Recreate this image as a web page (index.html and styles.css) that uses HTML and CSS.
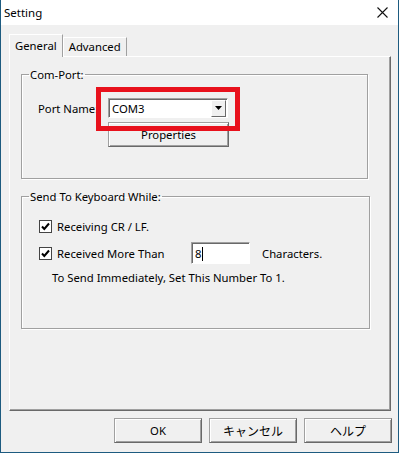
FILE: index.html
```html
<!DOCTYPE html>
<html lang="en">
<head>
    <meta charset="UTF-8">
    <title>Setting</title>
    <link rel="stylesheet" href="styles.css">
</head>
<body>

    <div class="window">
        <div class="titlebar">
            <span class="title">Setting</span>
            <svg class="close" width="11" height="11" viewBox="0 0 11 11">
                <path d="M0.5 0.5 L10.5 10.5 M10.5 0.5 L0.5 10.5" stroke="#111" stroke-width="1.1" fill="none"/>
            </svg>
        </div>

        <div class="content">
            <div class="tabs">
                <div class="tab active">General</div>
                <div class="tab">Advanced</div>
            </div>

            <div class="panel">
                <fieldset class="group com-group">
                    <legend>Com-Port:</legend>
                    <div class="port-row">
                        <span class="port-label">Port Name:</span>
                        <div class="combo">
                            <span class="combo-value">COM3</span>
                            <span class="combo-btn">
                                <svg width="7" height="4" viewBox="0 0 7 4"><path d="M0 0 H7 L3.5 4 Z" fill="#000"/></svg>
                            </span>
                        </div>
                        <!-- annotation box drawn over the screenshot -->
                        <div class="highlight"></div>
                    </div>
                    <button class="btn props-btn">Properties</button>
                </fieldset>

                <fieldset class="group send-group">
                    <legend>Send To Keyboard While:</legend>
                    <div class="check-row">
                        <span class="checkbox">
                            <svg width="11" height="11" viewBox="0 0 11 11"><path d="M2 5.5 L4.3 8 L9 2.5" stroke="#000" stroke-width="2" fill="none"/></svg>
                        </span>
                        <span>Receiving CR / LF.</span>
                    </div>
                    <div class="check-row count-row">
                        <span class="checkbox">
                            <svg width="11" height="11" viewBox="0 0 11 11"><path d="M2 5.5 L4.3 8 L9 2.5" stroke="#000" stroke-width="2" fill="none"/></svg>
                        </span>
                        <span class="count-label">Received More Than</span>
                        <div class="edit">8<span class="caret"></span></div>
                        <span class="count-unit">Characters.</span>
                    </div>
                    <div class="note">To Send Immediately, Set This Number To 1.</div>
                </fieldset>
            </div>

            <div class="buttons">
                <button class="btn dlg-btn">OK</button>
                <button class="btn dlg-btn jp">キャンセル</button>
                <button class="btn dlg-btn jp">ヘルプ</button>
            </div>
        </div>
    </div>

</body>
</html>
```

FILE: styles.css
```css
* { margin: 0; padding: 0; box-sizing: border-box; }
body {
    font-family: 'Noto Sans', 'Noto Sans CJK JP', sans-serif;
    font-size: 11.3px; color: #000; background: #f0f0f0;
}

.window {
    width: 399px; height: 453px; background: #f0f0f0;
    border: 1px solid #1d5b80; border-top: none;
}

.titlebar {
    height: 25px; background: #fff; display: flex; align-items: center;
    justify-content: space-between; padding: 0 10px 0 3px;
}
.title { font-size: 11.5px; }
.close { display: block; }

.content { padding: 9px 6px 0 8px; }

.tabs { display: flex; align-items: flex-end; height: 22px; }
.tab {
    height: 19px; padding: 0 5px; line-height: 17px; background: #f0f0f0;
    border: 1px solid #fff; border-bottom: none; border-right-color: #a0a0a0;
}
.tab.active {
    height: 23px; margin-bottom: -1px; padding: 2px 5px 0 5px; position: relative; z-index: 1;
}

.panel {
    width: 382px; height: 355px; padding: 10px 0 0 11px;
    border: 1px solid #fff; border-right-color: #696969; border-bottom-color: #696969;
    box-shadow: inset -1px -1px 0 #a0a0a0;
}

.group {
    border: 1px solid #a0a0a0; min-inline-size: 0; padding: 0;
    box-shadow: 1px 1px 0 #fff, inset 1px 1px 0 #fff;
}
.group legend { margin-left: 7px; padding: 0 1px; line-height: 15px; }

.com-group { width: 347px; height: 112px; padding-top: 16px; }
.send-group { width: 349px; height: 140px; margin-top: 10px; padding-top: 14px; }

.port-row { display: flex; align-items: center; margin-left: 16px; position: relative; height: 20px; }
.port-label { width: 70px; white-space: nowrap; overflow: hidden; }
.combo {
    width: 120px; height: 20px; background: #fff; display: flex; align-items: center;
    border: 1px solid #a0a0a0; border-right-color: #fff; border-bottom-color: #fff;
    box-shadow: inset 1px 1px 0 #696969;
}
.combo-value { flex: 1; padding-left: 3px; padding-top: 1px; }
.combo-btn {
    width: 15px; height: 17px; margin-right: 1px; background: #f0f0f0;
    display: flex; align-items: center; justify-content: center;
    border: 1px solid #fff; border-right-color: #696969; border-bottom-color: #696969;
}
.combo-btn svg { display: block; }
.highlight {
    position: absolute; left: 58px; top: -11px; width: 144px; height: 44px;
    border: 5px solid #e8111c;
}

.btn {
    font-family: inherit; font-size: 11.3px; color: #000; background: #f0f0f0;
    border: 1px solid #a0a0a0; border-right-color: #696969; border-bottom-color: #696969;
    box-shadow: inset 1px 1px 0 #fff, inset -1px -1px 0 #a0a0a0;
}
.props-btn { display: block; width: 121px; height: 25px; margin: 4px 0 0 86px; }

.check-row { display: flex; align-items: center; margin-left: 17px; height: 16px; }
.checkbox {
    width: 13px; height: 13px; margin-right: 5px; background: #fff;
    border: 1px solid #444; display: flex; align-items: center; justify-content: center;
}
.checkbox svg { display: block; }
.count-row { height: 22px; margin-top: 8px; }
.count-label { width: 134px; }
.edit {
    width: 59px; height: 22px; background: #fff; padding: 1px 0 0 3px; line-height: 18px;
    display: flex; align-items: center;
    border: 1px solid #a0a0a0; border-right-color: #fff; border-bottom-color: #fff;
    box-shadow: inset 1px 1px 0 #696969;
}
.caret { width: 1px; height: 14px; background: #000; margin-left: 1px; }
.count-unit { margin-left: 12px; }
.note { margin: 6px 0 0 30px; line-height: 16px; }

.buttons { display: flex; justify-content: flex-end; gap: 7px; margin-top: 7px; }
.dlg-btn { width: 88px; height: 25px; }
.dlg-btn.jp { font-size: 12px; }
```
